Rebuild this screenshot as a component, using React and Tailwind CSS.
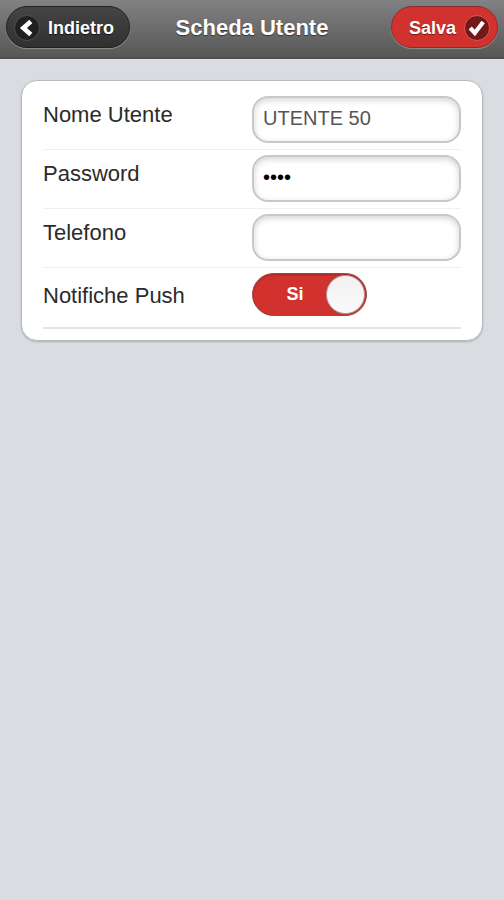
import { useState } from 'react';

function Row({ id, label, children }) {
  return (
    <div className="flex items-start border-b border-[#f0f0f0] pt-[5px] pb-[6px]">
      <label htmlFor={id} className="w-1/2 pt-[5px] text-[22px] leading-[28px] text-[#2b2b2b]">{label}</label>
      {children}
    </div>
  );
}

function TextField({ id, ...props }) {
  return (
    <input
      id={id}
      className="h-[47px] w-1/2 min-w-0 rounded-2xl border-2 border-[#c8c8c8] bg-white px-[9px] pb-[2px] text-[20px] text-[#555] shadow-[inset_0_2px_6px_rgba(0,0,0,0.18)] outline-none [&[type=password]]:text-black"
      {...props}
    />
  );
}

export default function App() {
  const [name, setName] = useState('UTENTE 50');
  const [password, setPassword] = useState('1234');
  const [phone, setPhone] = useState('');
  const [push, setPush] = useState(true);

  return (
    <div className="min-h-screen bg-[#d9dde1] font-['Liberation_Sans',Arial,sans-serif]">
      {/* Header bar */}
      <header className="grid grid-cols-[1fr_auto_1fr] items-center border-b-2 border-[#4e4e4e] bg-gradient-to-b from-[#828284] to-[#575757] px-[6px] pt-[6px] pb-[9px]">
        <button
          type="button"
          className="flex h-[42px] items-center gap-2 justify-self-start rounded-full border border-[#222] bg-gradient-to-b from-[#454545] to-[#303030] pt-[2px] pr-[15px] pl-[7px] text-[18px] font-bold text-white shadow-[0_1px_1px_rgba(255,255,255,0.3)] [text-shadow:0_1px_1px_#111]"
        >
          <svg viewBox="0 0 26 26" className="size-[26px]" aria-hidden="true">
            <circle cx="13" cy="13" r="12.5" fill="#202020" stroke="#505050" />
            <path d="M16.8 6.6 9.4 13l7.4 6.4" fill="none" stroke="#fff" strokeWidth="4.6" />
          </svg>
          Indietro
        </button>
        <h1 className="pt-[2px] text-[22px] leading-[28px] font-bold text-white [text-shadow:0_1px_1px_#333]">Scheda Utente</h1>
        <button
          type="button"
          className="flex h-[42px] items-center gap-2 justify-self-end rounded-full border border-[#8d2b28] bg-[#d2322d] pt-[2px] pr-[7px] pl-[17px] text-[18px] font-bold text-white shadow-[0_1px_1px_rgba(255,255,255,0.3)] [text-shadow:0_1px_1px_#7a1512]"
        >
          Salva
          <svg viewBox="0 0 26 26" className="size-[26px]" aria-hidden="true">
            <circle cx="13" cy="13" r="12.5" fill="#74191a" stroke="#dc5752" />
            <path d="m6.2 13 4.6 5 8.4-11" fill="none" stroke="#fff" strokeWidth="4.2" />
          </svg>
        </button>
      </header>

      {/* User form */}
      <form className="mx-[21px] mt-[21px] rounded-2xl border border-[#b8bbbe] bg-white px-[21px] pt-[10px] pb-[11px] shadow-[0_1px_2px_rgba(0,0,0,0.2)]">
        <Row id="name" label="Nome Utente">
          <TextField id="name" type="text" value={name} onChange={(e) => setName(e.target.value)} />
        </Row>
        <Row id="password" label="Password">
          <TextField id="password" type="password" value={password} onChange={(e) => setPassword(e.target.value)} />
        </Row>
        <Row id="phone" label="Telefono">
          <TextField id="phone" type="tel" value={phone} onChange={(e) => setPhone(e.target.value)} />
        </Row>
        <div className="flex items-start border-b-2 border-[#e4e4e4] pt-[5px] pb-[11px]">
          <label htmlFor="push" className="w-1/2 pt-[9px] text-[22px] leading-[28px] text-[#2b2b2b]">Notifiche Push</label>
          <label className={`flex h-[43px] w-[115px] cursor-pointer items-center justify-between rounded-full border border-[#9c4845] pr-px text-[18px] font-bold shadow-[inset_0_1px_2px_rgba(0,0,0,0.25)] ${push ? 'bg-[#d2322d] text-white' : 'flex-row-reverse bg-gray-200 text-gray-700'}`}>
            <input
              id="push"
              type="checkbox"
              role="switch"
              className="sr-only"
              checked={push}
              onChange={(e) => setPush(e.target.checked)}
            />
            <span className="flex-1 pl-[11px] text-center">{push ? 'Si' : 'No'}</span>
            <span className="size-[39px] rounded-full border border-[#aaa] bg-gradient-to-b from-[#f1f1f1] to-[#fafafa]" />
          </label>
        </div>
      </form>
    </div>
  );
}
